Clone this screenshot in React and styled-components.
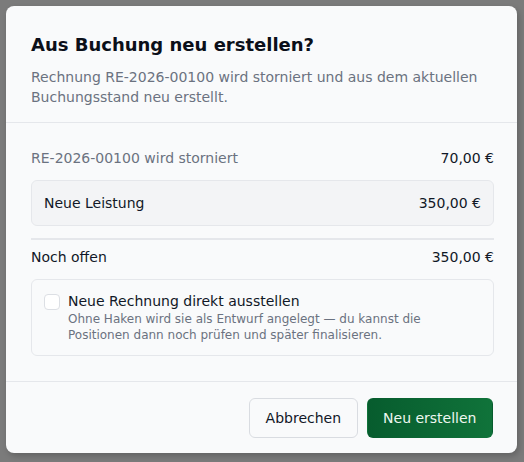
import styled, { createGlobalStyle } from "styled-components";

const GlobalStyle = createGlobalStyle`
  html, body {
    margin: 0;
    padding: 0;
    background: #7b7b7b;
    font-family: "DejaVu Sans", "Noto Sans", sans-serif;
    color: #111827;
  }
  * { box-sizing: border-box; }
`;

const Overlay = styled.div`
  width: 524px;
  height: 462px;
  padding: 6px 7px 9px 6px;
  display: flex;
`;

const Dialog = styled.div`
  flex: 1;
  display: flex;
  flex-direction: column;
  background: #f9fafb;
  border-radius: 8px;
  box-shadow: 2px 3px 6px rgba(0, 0, 0, 0.2);
  overflow: hidden;
`;

const Header = styled.div`
  padding: 26px 25px 15px;
  border-bottom: 1px solid #e5e7eb;
`;

const Title = styled.h2`
  margin: 0 0 10px;
  font-size: 18px;
  line-height: 25px;
  font-weight: 700;
  color: #0b0f19;
`;

const Description = styled.p`
  margin: 0;
  font-size: 14px;
  line-height: 20px;
  color: #6b7280;
`;

const Body = styled.div`
  padding: 25px 23px 25px 25px;
  display: flex;
  flex-direction: column;
`;

const Row = styled.div`
  display: flex;
  justify-content: space-between;
  align-items: center;
  font-size: 14px;
  line-height: 20px;
  color: ${(p) => (p.$muted ? "#6b7280" : "#111827")};
`;

const Amount = styled.span`
  color: #111827;
`;

const Box = styled.div`
  margin-top: 12px;
  padding: 12px 12px;
  background: #f3f4f6;
  border: 1px solid #e5e7eb;
  border-radius: 6px;
`;

const Divider = styled.div`
  height: 2px;
  background: #e5e7eb;
  margin: 12px 0 7px;
`;

const CheckCard = styled.label`
  margin-top: 12px;
  padding: 11px 12px 12px;
  border: 1px solid #e5e7eb;
  border-radius: 6px;
  display: flex;
  gap: 8px;
  align-items: flex-start;
  cursor: pointer;
`;

const CheckBox = styled.span`
  flex: none;
  width: 16px;
  height: 16px;
  margin-top: 3px;
  border: 1px solid #dcdfe4;
  border-radius: 4px;
  background: #ffffff;
`;

const CheckText = styled.div`
  display: flex;
  flex-direction: column;
`;

const CheckLabel = styled.span`
  font-size: 14px;
  line-height: 20px;
  color: #111827;
`;

const CheckHint = styled.span`
  font-size: 12px;
  line-height: 16px;
  color: #6b7280;
`;

const Footer = styled.div`
  margin-top: auto;
  border-top: 1px solid #e5e7eb;
  padding: 16px 24px 16px;
  display: flex;
  justify-content: flex-end;
  gap: 9px;
`;

const Button = styled.button`
  height: 40px;
  padding: 0 15.5px;
  border-radius: 6px;
  font-family: inherit;
  font-size: 14px;
  cursor: pointer;
  border: 1px solid ${(p) => (p.$primary ? "transparent" : "#d9dce1")};
  background: ${(p) =>
    p.$primary ? "linear-gradient(90deg, #075c2e, #10733a)" : "#f9fafb"};
  color: ${(p) => (p.$primary ? "#eef7f0" : "#111827")};
`;

export default function App() {
  return (
    <>
      <GlobalStyle />
      <Overlay>
        <Dialog>
          <Header>
            <Title>Aus Buchung neu erstellen?</Title>
            <Description>
              Rechnung RE-2026-00100 wird storniert und aus dem aktuellen
              Buchungsstand neu erstellt.
            </Description>
          </Header>
          <Body>
            <Row $muted>
              <span>RE-2026-00100 wird storniert</span>
              <Amount>70,00 €</Amount>
            </Row>
            <Box>
              <Row>
                <span>Neue Leistung</span>
                <Amount>350,00 €</Amount>
              </Row>
            </Box>
            <Divider />
            <Row>
              <span>Noch offen</span>
              <Amount>350,00 €</Amount>
            </Row>
            <CheckCard>
              <CheckBox />
              <CheckText>
                <CheckLabel>Neue Rechnung direkt ausstellen</CheckLabel>
                <CheckHint>
                  Ohne Haken wird sie als Entwurf angelegt — du kannst die
                  Positionen dann noch prüfen und später finalisieren.
                </CheckHint>
              </CheckText>
            </CheckCard>
          </Body>
          <Footer>
            <Button>Abbrechen</Button>
            <Button $primary>Neu erstellen</Button>
          </Footer>
        </Dialog>
      </Overlay>
    </>
  );
}
